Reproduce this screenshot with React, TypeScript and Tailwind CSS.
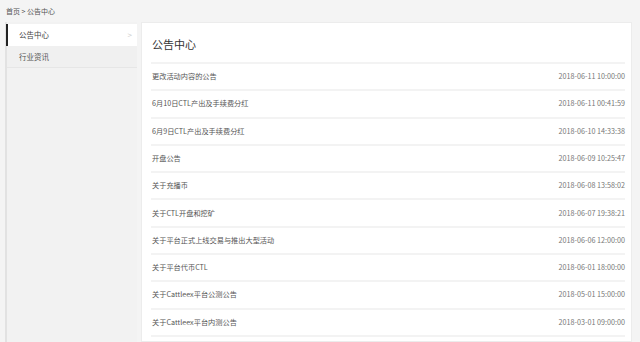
import React from "react";

const rows: [string, string][] = [
  ["更改活动内容的公告", "2018-06-11 10:00:00"],
  ["6月10日CTL产出及手续费分红", "2018-06-11 00:41:59"],
  ["6月9日CTL产出及手续费分红", "2018-06-10 14:33:38"],
  ["开盘公告", "2018-06-09 10:25:47"],
  ["关于充播币", "2018-06-08 13:58:02"],
  ["关于CTL开盘和挖矿", "2018-06-07 19:38:21"],
  ["关于平台正式上线交易与推出大型活动", "2018-06-06 12:00:00"],
  ["关于平台代币CTL", "2018-06-01 18:00:00"],
  ["关于Cattleex平台公测公告", "2018-05-01 15:00:00"],
  ["关于Cattleex平台内测公告", "2018-03-01 09:00:00"],
];

export default function App() {
  return (
    <div
      className="w-[640px] h-[342px] overflow-hidden bg-[#f4f4f4] text-[#555]"
      style={{ fontFamily: '"Noto Sans CJK SC", "Liberation Sans", sans-serif' }}
    >
      <div className="h-[22px] flex items-center pl-[6px] text-[7px] text-[#555] leading-none">
        首页 &gt; 公告中心
      </div>
      <div className="flex pl-[5px] pr-[8px] gap-[4px] h-[320px]">
        <div className="w-[132px] bg-[#f2f2f2] border-l-[2px] border-[#e2e2e2] pt-[2px] flex flex-col">
          <div className="h-[22px] bg-white border-l-[2px] border-[#222] -ml-[1px] flex items-center justify-between pl-[11px] pr-[5px] text-[7.5px] text-[#444] leading-none">
            <span>公告中心</span>
            <span className="text-[#ccc] text-[8px]">&gt;</span>
          </div>
          <div className="h-[22px] bg-[#f0f0f0] border-b border-[#e6e6e6] flex items-center pl-[12px] text-[7.5px] text-[#555] leading-none">
            行业资讯
          </div>
        </div>
        <div className="flex-1 bg-white border border-[#ececec] pl-[9px] pr-[6px] pt-[1px]">
          <div className="h-[40px] flex items-end pb-[12px] pl-[1px] border-b-[2px] border-[#f3f3f3] text-[11px] text-[#333] leading-none">
            公告中心
          </div>
          {rows.map(([t, d]) => (
            <div
              key={t}
              className="h-[27.3px] flex items-center justify-between pl-[1px] border-b-[2px] border-[#f3f3f3] text-[7.2px] text-[#555] leading-none"
            >
              <span>{t}</span>
              <span className="text-[#777]">{d}</span>
            </div>
          ))}
        </div>
      </div>
    </div>
  );
}
